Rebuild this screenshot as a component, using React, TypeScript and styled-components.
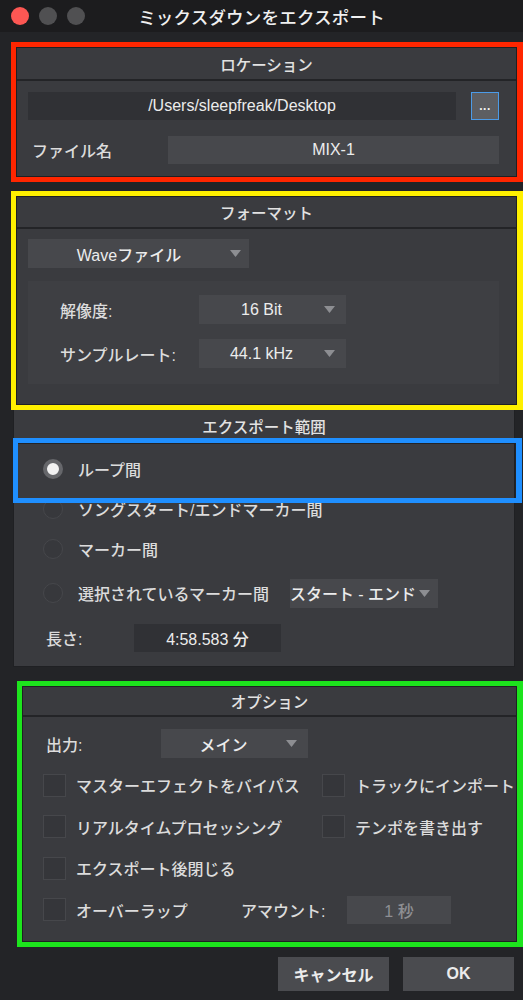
import React from "react";
import styled, { createGlobalStyle } from "styled-components";

const GlobalStyle = createGlobalStyle`
  html, body {
    margin: 0;
    padding: 0;
    background: #232427;
  }
  body {
    font-family: "Liberation Sans", "Noto Sans CJK JP", sans-serif;
    font-weight: 500;
    color: #dedede;
  }
`;

const Window = styled.div`
  width: 523px;
  height: 1000px;
  overflow: hidden;
  background: #232427;
  display: flex;
  flex-direction: column;
`;

const TitleBar = styled.div`
  height: 32px;
  flex: none;
  background: #1c1c1e;
  display: grid;
  grid-template-columns: 1fr auto 1fr;
  align-items: center;
`;

const Lights = styled.div`
  display: flex;
  gap: 10px;
  padding-left: 11px;
`;

const Light = styled.span<{ $color: string }>`
  width: 18px;
  height: 18px;
  border-radius: 50%;
  background: ${(p) => p.$color};
`;

const Title = styled.div`
  font-size: 17.5px;
  color: #f0f0f0;
  letter-spacing: 0.2px;
`;

// coloured annotation frames drawn round the panels
const Frame = styled.div<{ $color: string; $top: number; $left: number }>`
  margin: ${(p) => p.$top}px 0 0 ${(p) => p.$left}px;
  border: 5px solid ${(p) => p.$color};
  border-right-width: 6px;
`;

const Panel = styled.div`
  background: #3a3b3f;
  border: 1px solid #1f2023;
`;

const PanelHeader = styled.div<{ $h: number }>`
  height: ${(p) => p.$h}px;
  display: flex;
  align-items: center;
  justify-content: center;
  font-size: 15.5px;
  color: #e2e2e2;
  border-bottom: 2px solid #232427;
`;

const LocationBody = styled.div`
  padding: 11px 17px 12px 11px;
  display: flex;
  flex-direction: column;
  gap: 16px;
`;

const Row = styled.div`
  display: flex;
  align-items: center;
`;

const Field = styled.div<{ $tone: "dark" | "light"; $w?: number; $muted?: boolean }>`
  height: 28px;
  ${(p) => (p.$w ? `width: ${p.$w}px;` : "flex: 1;")}
  background: ${(p) => (p.$tone === "dark" ? "#303135" : "#47484c")};
  display: flex;
  align-items: center;
  justify-content: center;
  font-size: 16px;
  color: ${(p) => (p.$muted ? "#8e8f93" : "#ececec")};
  white-space: nowrap;
`;

const BrowseButton = styled.div`
  width: 26px;
  height: 26px;
  margin-left: 15px;
  background: #5d5e62;
  border: 1px solid #4c9be8;
  display: flex;
  align-items: center;
  justify-content: center;
  color: #f4f4f4;
  font-size: 12px;
  font-weight: bold;
  letter-spacing: 0.5px;
`;

const Label = styled.div<{ $w: number; $pad?: number }>`
  width: ${(p) => p.$w}px;
  flex: none;
  padding-left: ${(p) => p.$pad ?? 0}px;
  box-sizing: border-box;
  font-size: 16px;
  color: #dcdcdc;
  white-space: nowrap;
`;

const FormatBody = styled.div`
  padding: 10px 17px 20px 11px;
  display: flex;
  flex-direction: column;
  gap: 13px;
`;

const SubPanel = styled.div`
  background: #3e3f43;
  padding: 14px 0 16px 32px;
  display: flex;
  flex-direction: column;
  gap: 15px;
`;

const DropBox = styled.div<{ $w: number; $pr: number; $ml?: number }>`
  width: ${(p) => p.$w}px;
  height: 29px;
  flex: none;
  margin-left: ${(p) => p.$ml ?? 0}px;
  background: #47484c;
  display: flex;
  align-items: center;
  padding-right: ${(p) => p.$pr}px;
  box-sizing: border-box;
  font-size: 16px;
  color: #ececec;
  white-space: nowrap;
`;

const DropText = styled.span<{ $center?: boolean }>`
  flex: 1;
  text-align: ${(p) => (p.$center ? "center" : "left")};
`;

const Arrow = () => (
  <svg width="11" height="7" viewBox="0 0 11 7">
    <path d="M0 0 L11 0 L5.5 7 Z" fill="#8d8e92" />
  </svg>
);

const Dropdown = ({ text, w, pr = 11 }: { text: string; w: number; pr?: number }) => (
  <DropBox $w={w} $pr={pr}>
    <DropText $center>{text}</DropText>
    <Arrow />
  </DropBox>
);

const RangePanel = styled(Panel)`
  position: relative;
  margin: 0 8px 0 13px;
  border-top: none;
`;

const RangeHeader = styled.div`
  height: 34px;
  box-sizing: border-box;
  padding-top: 8px;
  line-height: 20px;
  text-align: center;
  font-size: 15.5px;
  color: #e2e2e2;
  border-bottom: 2px solid #232427;
`;

const RangeBody = styled.div`
  padding: 5px 0 8px 29px;
  display: flex;
  flex-direction: column;
`;

const RangeRow = styled.div<{ $h: number }>`
  height: ${(p) => p.$h}px;
  display: flex;
  align-items: center;
`;

const Radio = styled.span<{ $on?: boolean }>`
  width: 20px;
  height: 20px;
  flex: none;
  border-radius: 50%;
  box-sizing: border-box;
  background: ${(p) => (p.$on ? "#f2f2f2" : "#37383c")};
  border: ${(p) => (p.$on ? "4px solid #66676b" : "1px solid #46474b")};
  margin-right: 15px;
`;

const RadioLabel = styled.span`
  font-size: 16px;
  color: #dcdcdc;
  white-space: nowrap;
`;

const HighlightFrame = styled.div`
  position: absolute;
  top: 28px;
  left: -1px;
  right: -8px;
  height: 65px;
  box-sizing: border-box;
  border: 5px solid #1f8fff;
  border-right-width: 6px;
  pointer-events: none;
`;

const OptionsBody = styled.div`
  padding: 12px 0 17px 20px;
  display: flex;
  flex-direction: column;
  gap: 12.5px;
`;

const CheckGrid = styled.div`
  display: grid;
  grid-template-columns: 279px auto;
  row-gap: 12.5px;
`;

const CheckCell = styled.div<{ $w?: number }>`
  height: 29px;
  display: flex;
  align-items: center;
  ${(p) => (p.$w ? `width: ${p.$w}px; flex: none;` : "")}
`;

const Box = styled.span`
  width: 23px;
  height: 23px;
  flex: none;
  box-sizing: border-box;
  background: #35363a;
  border: 1px solid #46474b;
  margin-right: 10px;
`;

const ButtonRow = styled.div`
  margin-top: 10px;
  padding-right: 9px;
  display: flex;
  justify-content: flex-end;
  gap: 14px;
`;

const Button = styled.div`
  width: 111px;
  height: 34px;
  background: #4a4b4f;
  display: flex;
  align-items: center;
  justify-content: center;
  font-size: 16px;
  font-weight: bold;
  color: #ececec;
`;

const Check = ({ label }: { label: string }) => (
  <CheckCell>
    <Box />
    <RadioLabel>{label}</RadioLabel>
  </CheckCell>
);

export default function App() {
  return (
    <Window>
      <GlobalStyle />
      <TitleBar>
        <Lights>
          <Light $color="#fc5753" />
          <Light $color="#505052" />
          <Light $color="#505052" />
        </Lights>
        <Title>ミックスダウンをエクスポート</Title>
        <div />
      </TitleBar>

      <Frame $color="#ff2600" $top={10} $left={11}>
        <Panel>
          <PanelHeader $h={31}>ロケーション</PanelHeader>
          <LocationBody>
            <Row>
              <Field $tone="dark">/Users/sleepfreak/Desktop</Field>
              <BrowseButton>...</BrowseButton>
            </Row>
            <Row>
              <Label $w={140} $pad={4}>ファイル名</Label>
              <Field $tone="light">MIX-1</Field>
            </Row>
          </LocationBody>
        </Panel>
      </Frame>

      <Frame $color="#fff000" $top={9} $left={11}>
        <Panel>
          <PanelHeader $h={30}>フォーマット</PanelHeader>
          <FormatBody>
            <Dropdown text="Waveファイル" w={221} pr={8} />
            <SubPanel>
              <Row>
                <Label $w={139}>解像度:</Label>
                <Dropdown text="16 Bit" w={147} />
              </Row>
              <Row>
                <Label $w={139}>サンプルレート:</Label>
                <Dropdown text="44.1 kHz" w={147} />
              </Row>
            </SubPanel>
          </FormatBody>
        </Panel>
      </Frame>

      <RangePanel>
        <RangeHeader>エクスポート範囲</RangeHeader>
        <RangeBody>
          <RangeRow $h={40}>
            <Radio $on />
            <RadioLabel>ループ間</RadioLabel>
          </RangeRow>
          <RangeRow $h={40}>
            <Radio />
            <RadioLabel>ソングスタート/エンドマーカー間</RadioLabel>
          </RangeRow>
          <RangeRow $h={40}>
            <Radio />
            <RadioLabel>マーカー間</RadioLabel>
          </RangeRow>
          <RangeRow $h={48}>
            <Radio />
            <RadioLabel>選択されているマーカー間</RadioLabel>
            <DropBox $w={148} $pr={8} $ml={21}>
              <DropText>スタート - エンド</DropText>
              <Arrow />
            </DropBox>
          </RangeRow>
          <RangeRow $h={41}>
            <Label $w={91} $pad={3}>長さ:</Label>
            <Field $tone="dark" $w={147}>4:58.583 分</Field>
          </RangeRow>
        </RangeBody>
        <HighlightFrame />
      </RangePanel>

      <Frame $color="#1de41d" $top={14} $left={17}>
        <Panel>
          <PanelHeader $h={28}>オプション</PanelHeader>
          <OptionsBody>
            <Row>
              <Label $w={118} $pad={3}>出力:</Label>
              <Dropdown text="メイン" w={147} />
            </Row>
            <CheckGrid>
              <Check label="マスターエフェクトをバイパス" />
              <Check label="トラックにインポート" />
              <Check label="リアルタイムプロセッシング" />
              <Check label="テンポを書き出す" />
              <Check label="エクスポート後閉じる" />
              <div />
            </CheckGrid>
            <Row>
              <CheckCell $w={198}>
                <Box />
                <RadioLabel>オーバーラップ</RadioLabel>
              </CheckCell>
              <Label $w={106}>アマウント:</Label>
              <Field $tone="light" $w={104} $muted>1 秒</Field>
            </Row>
          </OptionsBody>
        </Panel>
      </Frame>

      <ButtonRow>
        <Button>キャンセル</Button>
        <Button>OK</Button>
      </ButtonRow>
    </Window>
  );
}
